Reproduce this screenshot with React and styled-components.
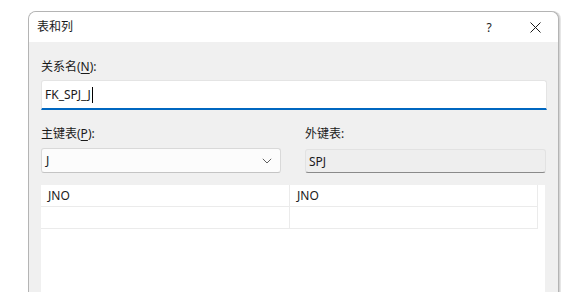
import React from 'react';
import styled, { createGlobalStyle } from 'styled-components';

const Global = createGlobalStyle`
  html, body { margin: 0; padding: 0; background: #ffffff; }
  body {
    font-family: "Noto Sans", "Noto Sans CJK SC", sans-serif;
    font-size: 12px;
    color: #1a1a1a;
  }
`;

const Page = styled.div`
  width: 586px;
  height: 304px;
  box-sizing: border-box;
  padding: 11px 0 0 28px;
  display: flex;
  overflow: hidden;
`;

const Dialog = styled.div`
  width: 531px;
  height: 281px;
  box-sizing: border-box;
  display: flex;
  flex-direction: column;
  border: 1px solid #b4b4b4;
  border-bottom: none;
  border-radius: 8px 8px 0 0;
  background: #f0f0f0;
  overflow: hidden;
  box-shadow: 1px 0 0 #d4d4d4, 2px 0 0 #e6e6e6;
`;

const TitleBar = styled.div`
  height: 30px;
  flex: none;
  display: flex;
  align-items: center;
  background: #ffffff;
`;

const Title = styled.div`
  flex: 1;
  padding-left: 8px;
  font-size: 12px;
  line-height: 16px;
  color: #1a1a1a;
`;

const TitleButton = styled.div`
  width: 46px;
  height: 30px;
  display: flex;
  align-items: center;
  justify-content: center;
  font-size: 12px;
  color: #1a1a1a;
`;

const Body = styled.div`
  flex: 1;
  display: flex;
  flex-direction: column;
  padding: 17px 11px 0 12px;
  min-height: 0;
`;

const Label = styled.div`
  font-size: 12px;
  line-height: 16px;
  color: #1a1a1a;
  margin-top: ${p => p.$top || 0}px;
  u { text-decoration: underline; text-underline-offset: 2px; }
`;

const TextBox = styled.div`
  margin-top: 5px;
  height: 30px;
  box-sizing: border-box;
  background: #ffffff;
  border: 1px solid #e4e4e4;
  border-bottom: 2px solid #0067c0;
  border-radius: 3px 3px 0 0;
  display: flex;
  align-items: center;
  padding-left: 3px;
  font-size: 12px;
`;

const Caret = styled.span`
  display: inline-block;
  width: 1px;
  height: 16px;
  background: #000;
  margin-left: 1px;
`;

const Columns = styled.div`
  margin-top: 16px;
  display: grid;
  grid-template-columns: 240px 241px;
  column-gap: 24px;
`;

const Column = styled.div`
  display: flex;
  flex-direction: column;
  gap: 6px;
`;

const Select = styled.div`
  height: 25px;
  box-sizing: border-box;
  background: #fcfcfc;
  border: 1px solid #d9d9d9;
  border-bottom-color: #c4c4c4;
  border-radius: 3px;
  display: flex;
  align-items: center;
  justify-content: space-between;
  padding: 0 8px 0 4px;
`;

const ReadOnly = styled.div`
  height: 24px;
  margin-top: 1px;
  box-sizing: border-box;
  background: #eeeeee;
  border: 1px solid #e2e2e2;
  border-bottom: 1px solid #8a8a8a;
  border-radius: 3px;
  display: flex;
  align-items: center;
  padding-left: 3px;
`;

const List = styled.div`
  margin-top: 12px;
  width: 504px;
  flex: 1;
  background: #ffffff;
`;

const Row = styled.div`
  display: grid;
  grid-template-columns: 249px 248px;
  height: 22px;
`;

const Cell = styled.div`
  box-sizing: border-box;
  border-right: 1px solid #ebebeb;
  border-bottom: 1px solid #ebebeb;
  padding-left: 7px;
  display: flex;
  align-items: center;
  font-size: 12px;
  line-height: 16px;
`;

const Chevron = () => (
  <svg width="10" height="6" viewBox="0 0 10 6">
    <path d="M0.8 0.8 L5 5 L9.2 0.8" fill="none" stroke="#5f5f5f" strokeWidth="1" />
  </svg>
);

const CloseIcon = () => (
  <svg width="11" height="11" viewBox="0 0 11 11">
    <path d="M0.5 0.5 L10.5 10.5 M10.5 0.5 L0.5 10.5" stroke="#1a1a1a" strokeWidth="1" />
  </svg>
);

const rows = [
  ['JNO', 'JNO'],
  ['', ''],
];

export default function App() {
  return (
    <>
      <Global />
      <Page>
        <Dialog>
          <TitleBar>
            <Title>表和列</Title>
            <TitleButton>?</TitleButton>
            <TitleButton><CloseIcon /></TitleButton>
          </TitleBar>
          <Body>
            <Label>关系名(<u>N</u>):</Label>
            <TextBox>FK_SPJ_J<Caret /></TextBox>
            <Columns>
              <Column>
                <Label>主键表(<u>P</u>):</Label>
                <Select>
                  <span>J</span>
                  <Chevron />
                </Select>
              </Column>
              <Column>
                <Label>外键表:</Label>
                <ReadOnly>SPJ</ReadOnly>
              </Column>
            </Columns>
            <List>
              {rows.map((r, i) => (
                <Row key={i}>
                  <Cell>{r[0]}</Cell>
                  <Cell>{r[1]}</Cell>
                </Row>
              ))}
            </List>
          </Body>
        </Dialog>
      </Page>
    </>
  );
}
